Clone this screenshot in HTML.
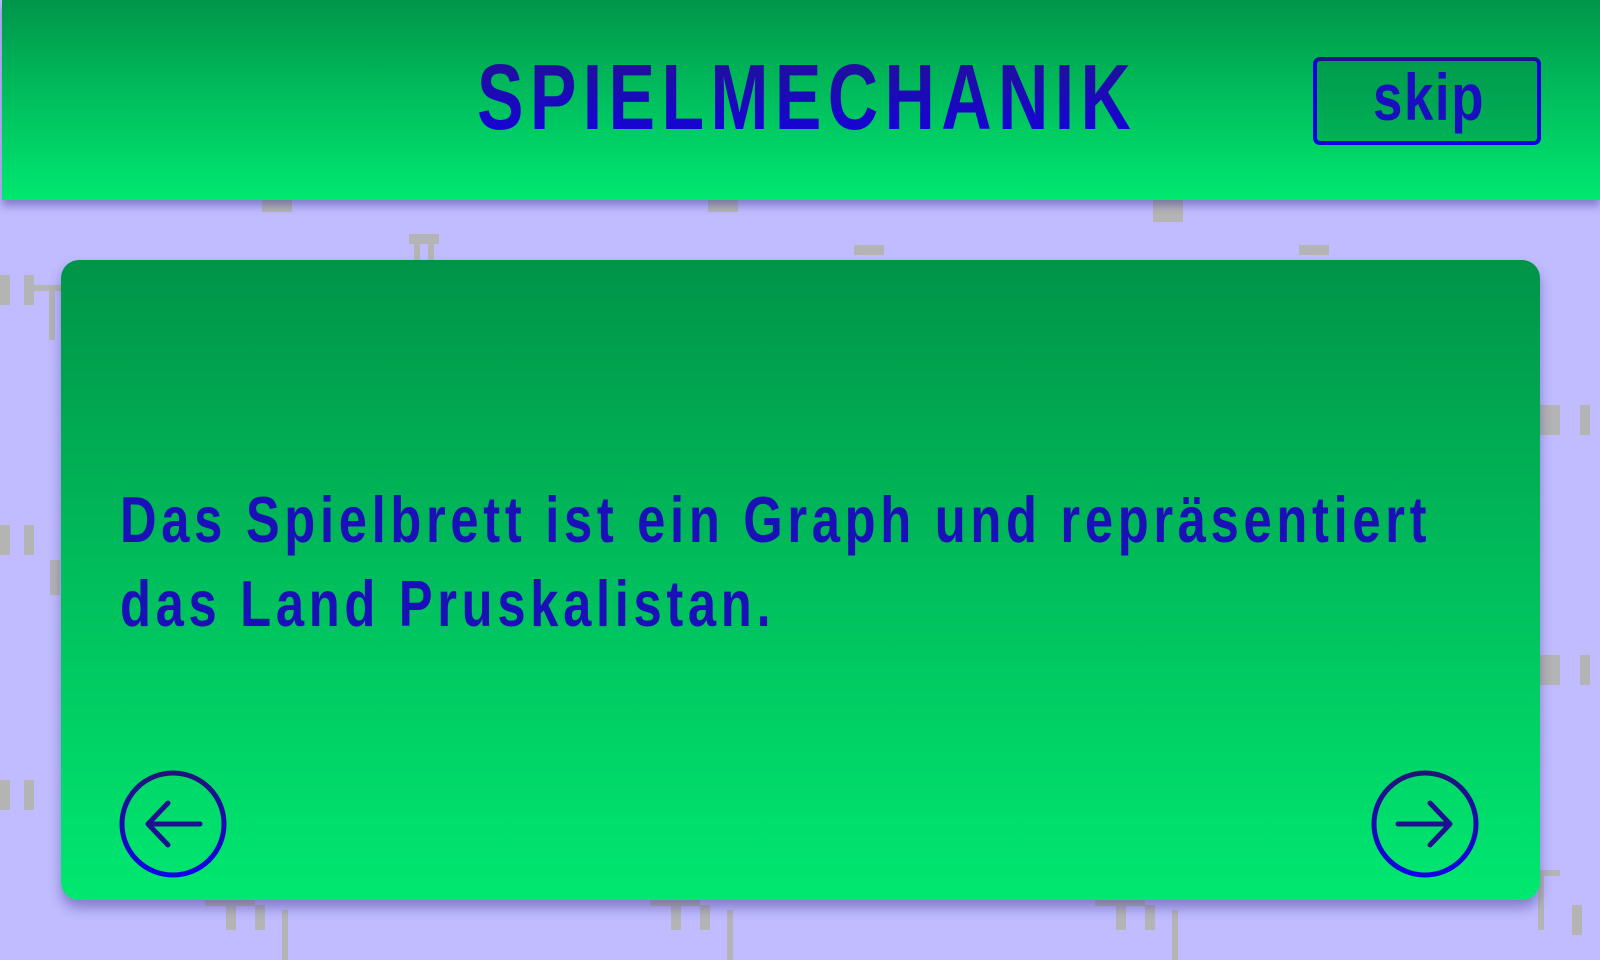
<!DOCTYPE html>
<html><head><meta charset="utf-8"><style>
html,body{margin:0;padding:0}
body{width:1600px;height:960px;background:#c0bcff;position:relative;overflow:hidden;font-family:"Liberation Sans",sans-serif}
.hdr{position:absolute;left:2px;top:0;width:1598px;height:200px;background:linear-gradient(#00964a,#00e870);box-shadow:0 6px 8px rgba(60,50,140,.45)}
.card{position:absolute;left:61px;top:260px;width:1479px;height:640px;border-radius:18px;background:linear-gradient(#009448,#00e870);box-shadow:0 8px 12px rgba(60,50,140,.45)}
.title{position:absolute;left:477px;top:42px;font-size:93px;font-weight:bold;line-height:110px;white-space:nowrap;transform:scaleX(.75);transform-origin:0 0;letter-spacing:8.5px;background:linear-gradient(#22138a,#1400e8);-webkit-background-clip:text;background-clip:text;color:transparent}
.skip{position:absolute;left:1313px;top:57px;width:220px;height:80px;border:4px solid #1400e0;border-top-color:#20128a;border-radius:7px;background:rgba(0,120,60,.35)}
.skip span{position:absolute;left:56px;top:-4px;font-size:66px;font-weight:bold;color:#1a0fc0;transform:scaleX(.8);transform-origin:0 0;line-height:80px;letter-spacing:2px}
.txt{position:absolute;left:120px;top:478px;font-size:65px;font-weight:bold;line-height:84px;white-space:nowrap;transform:scaleX(.78);transform-origin:0 0;letter-spacing:6px;color:#1a10b8}
svg{position:absolute;left:0;top:0}
</style></head><body>
<svg width="1600" height="960">
<g fill="#b4b4b4">
<rect x="262" y="200" width="30" height="12"/><rect x="708" y="200" width="30" height="12"/>
<rect x="1153" y="200" width="30" height="22"/>
<rect x="409" y="234" width="30" height="10"/><rect x="414" y="244" width="6" height="16"/><rect x="428" y="244" width="6" height="16"/>
<rect x="854" y="245" width="30" height="10"/><rect x="1299" y="245" width="30" height="10"/>
<rect x="0" y="275" width="10" height="30"/><rect x="24" y="275" width="10" height="30"/><rect x="34" y="285" width="27" height="6"/><rect x="49" y="285" width="6" height="55"/>
<rect x="0" y="525" width="10" height="30"/><rect x="24" y="525" width="10" height="30"/><rect x="50" y="560" width="10" height="35"/>
<rect x="0" y="780" width="10" height="30"/><rect x="24" y="780" width="10" height="30"/>
<rect x="1540" y="405" width="20" height="30"/><rect x="1580" y="405" width="10" height="30"/>
<rect x="1540" y="655" width="20" height="30"/><rect x="1580" y="655" width="10" height="30"/>
<rect x="1540" y="870" width="20" height="6"/><rect x="1538" y="870" width="6" height="60"/><rect x="1572" y="905" width="10" height="30"/>
<rect x="205" y="900" width="50" height="6"/><rect x="226" y="905" width="10" height="25"/><rect x="255" y="905" width="10" height="25"/><rect x="282" y="910" width="6" height="50"/>
<rect x="650" y="900" width="50" height="6"/><rect x="671" y="905" width="10" height="25"/><rect x="700" y="905" width="10" height="25"/><rect x="727" y="910" width="6" height="50"/>
<rect x="1095" y="900" width="50" height="6"/><rect x="1116" y="905" width="10" height="25"/><rect x="1145" y="905" width="10" height="25"/><rect x="1172" y="910" width="6" height="50"/>
</g></svg>
<div class="hdr"></div>
<div class="title">SPIELMECHANIK</div>
<div class="skip"><span>skip</span></div>
<div class="card"></div>
<div class="txt">Das Spielbrett ist ein Graph und repräsentiert<br>das Land Pruskalistan.</div>
<svg width="1600" height="960">
<defs><linearGradient id="g" x1="0" y1="0" x2="0" y2="1"><stop offset="0" stop-color="#22137a"/><stop offset="1" stop-color="#1400e8"/></linearGradient></defs>
<circle cx="173" cy="824" r="51" fill="none" stroke="url(#g)" stroke-width="5"/>
<path d="M200 824H148M168 803L148 824L168 845" fill="none" stroke="#1e1090" stroke-width="5" stroke-linecap="round" stroke-linejoin="round"/>
<circle cx="1425" cy="824" r="51" fill="none" stroke="url(#g)" stroke-width="5"/>
<path d="M1398 824H1450M1430 803L1450 824L1430 845" fill="none" stroke="#1e1090" stroke-width="5" stroke-linecap="round" stroke-linejoin="round"/>
</svg>
</body></html>
